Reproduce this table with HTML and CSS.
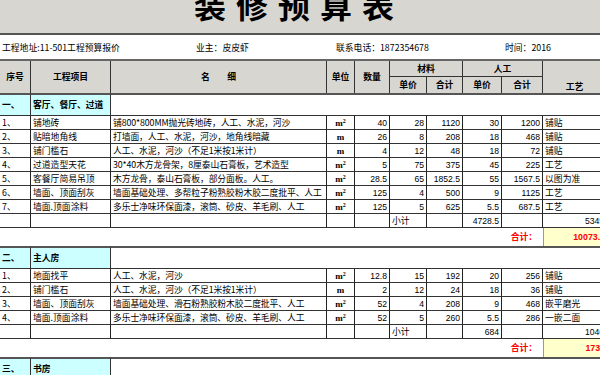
FILE: index.html
```html
<!DOCTYPE html>
<html lang="zh">
<head>
<meta charset="utf-8">
<title>装修预算表</title>
<link rel="stylesheet" href="styles.css">
</head>
<body>
<div class="page">
  <div class="title"><div class="title-text">装修预算表</div></div>
  <div class="info">
    <span>工程地址:11-501工程预算报价</span>
    <span>业主：皮皮虾</span>
    <span>联系电话：1872354678</span>
    <span>时间：2016</span>
  </div>
  <table class="sheet">
    <colgroup>
      <col class="c1"><col class="c2"><col class="c3"><col class="c4"><col class="c5">
      <col class="c6"><col class="c7"><col class="c8"><col class="c9"><col class="c10">
    </colgroup>
    <thead>
      <tr class="h1">
        <th rowspan="2">序号</th>
        <th rowspan="2">工程项目</th>
        <th rowspan="2">名&emsp;&emsp;细</th>
        <th rowspan="2">单位</th>
        <th rowspan="2">数量</th>
        <th colspan="2" class="grp">材料</th>
        <th colspan="2" class="grp">人工</th>
        <th rowspan="2" class="craft">工艺</th>
      </tr>
      <tr class="h2">
        <th>单价</th><th>合计</th><th>单价</th><th>合计</th>
      </tr>
    </thead>
    <tbody>
      <tr class="sec">
        <td class="cy">一、</td><td class="cy">客厅、餐厅、过道</td><td colspan="8" class="blank"></td>
      </tr>
      <tr class="row"><td>1、</td><td>铺地砖</td><td class="desc">铺800*800MM抛光砖地砖，人工、水泥，河沙</td><td class="u">m<sup>2</sup></td><td class="n">40</td><td class="n">28</td><td class="n">1120</td><td class="n">30</td><td class="n">1200</td><td>铺贴</td></tr>
      <tr class="row"><td>2、</td><td>贴暗地角线</td><td class="desc">打墙面，人工、水泥，河沙，地角线暗藏</td><td class="u">m</td><td class="n">26</td><td class="n">8</td><td class="n">208</td><td class="n">18</td><td class="n">468</td><td>铺贴</td></tr>
      <tr class="row"><td>3、</td><td>铺门槛石</td><td class="desc">人工、水泥，河沙（不足1米按1米计）</td><td class="u">m</td><td class="n">4</td><td class="n">12</td><td class="n">48</td><td class="n">18</td><td class="n">72</td><td>铺贴</td></tr>
      <tr class="row"><td>4、</td><td>过道造型天花</td><td class="desc">30*40木方龙骨架，8厘泰山石膏板，艺术造型</td><td class="u">m<sup>2</sup></td><td class="n">5</td><td class="n">75</td><td class="n">375</td><td class="n">45</td><td class="n">225</td><td>工艺</td></tr>
      <tr class="row"><td>5、</td><td>客餐厅简易吊顶</td><td class="desc">木方龙骨，泰山石膏板，部分面板。人工。</td><td class="u">m<sup>2</sup></td><td class="n">28.5</td><td class="n">65</td><td class="n">1852.5</td><td class="n">55</td><td class="n">1567.5</td><td>以图为准</td></tr>
      <tr class="row"><td>6、</td><td>墙面、顶面刮灰</td><td class="desc">墙面基础处理、多帮粒子粉熟胶粉木胶二度批平、人工</td><td class="u">m<sup>2</sup></td><td class="n">125</td><td class="n">4</td><td class="n">500</td><td class="n">9</td><td class="n">1125</td><td>工艺</td></tr>
      <tr class="row"><td>7、</td><td>墙面.顶面涂料</td><td class="desc">多乐士净味环保面漆，滚筒、砂皮、羊毛刷、人工</td><td class="u">m<sup>2</sup></td><td class="n">125</td><td class="n">5</td><td class="n">625</td><td class="n">5.5</td><td class="n">687.5</td><td>工艺</td></tr>
      <tr class="row"><td></td><td></td><td></td><td></td><td></td><td>小计</td><td></td><td class="n">4728.5</td><td></td><td class="n">5345</td></tr>
      <tr class="total"><td colspan="9" class="tlabel">合计：</td><td class="tval">10073.5</td></tr>

      <tr class="sec">
        <td class="cy">二、</td><td class="cy">主人房</td><td colspan="8" class="blank"></td>
      </tr>
      <tr class="row"><td>1、</td><td>地面找平</td><td class="desc">人工、水泥，河沙</td><td class="u">m<sup>2</sup></td><td class="n">12.8</td><td class="n">15</td><td class="n">192</td><td class="n">20</td><td class="n">256</td><td>铺贴</td></tr>
      <tr class="row"><td>2、</td><td>铺门槛石</td><td class="desc">人工、水泥，河沙（不足1米按1米计）</td><td class="u">m</td><td class="n">2</td><td class="n">12</td><td class="n">24</td><td class="n">18</td><td class="n">36</td><td>铺贴</td></tr>
      <tr class="row"><td>3、</td><td>墙面、顶面刮灰</td><td class="desc">墙面基础处理、滑石粉熟胶粉木胶二度批平、人工</td><td class="u">m<sup>2</sup></td><td class="n">52</td><td class="n">4</td><td class="n">208</td><td class="n">9</td><td class="n">468</td><td>嵌平磨光</td></tr>
      <tr class="row"><td>4、</td><td>墙面.顶面涂料</td><td class="desc">多乐士净味环保面漆，滚筒、砂皮、羊毛刷、人工</td><td class="u">m<sup>2</sup></td><td class="n">52</td><td class="n">5</td><td class="n">260</td><td class="n">5.5</td><td class="n">286</td><td>一嵌二面</td></tr>
      <tr class="row"><td></td><td></td><td></td><td></td><td></td><td>小计</td><td></td><td class="n">684</td><td></td><td class="n">1046</td></tr>
      <tr class="total"><td colspan="9" class="tlabel">合计：</td><td class="tval">1730</td></tr>

      <tr class="sec">
        <td class="cy">三、</td><td class="cy">书房</td><td colspan="8" class="blank"></td>
      </tr>
    </tbody>
  </table>
</div>
</body>
</html>
```

FILE: styles.css
```css
html, body {
  margin: 0;
  padding: 0;
  background: #ffffff;
}
body {
  font-family: "Noto Sans CJK SC", "Liberation Sans", sans-serif;
  font-size: 8.8px;
  color: #000000;
}
.page {
  width: 600px;
  height: 375px;
  overflow: hidden;
}
.title {
  height: 33px;
  background: #d8d6d1;
  border-bottom: 2px solid #555555;
  overflow: hidden;
}
.title-text {
  margin-top: -12px;
  padding-left: 194px;
  font-size: 32px;
  line-height: 32px;
  font-weight: bold;
  letter-spacing: 10px;
  white-space: nowrap;
}
.info {
  height: 24px;
  display: grid;
  grid-template-columns: 194px 140px 169px 1fr;
  align-items: center;
  padding-left: 2px;
  border-bottom: 2px solid #666666;
  white-space: nowrap;
}
.sheet {
  width: 607px;
  table-layout: fixed;
  border-collapse: separate;
  border-spacing: 0;
}
.c1 { width: 31px; }
.c2 { width: 80px; }
.c3 { width: 216px; }
.c4 { width: 28px; }
.c5 { width: 35px; }
.c6 { width: 37px; }
.c7 { width: 36px; }
.c8 { width: 39px; }
.c9 { width: 41px; }
.c10 { width: 64px; }
.sheet th, .sheet td {
  padding: 0;
  white-space: nowrap;
  overflow: hidden;
  line-height: 12px;
  box-sizing: border-box;
}
.sheet th {
  background: #d8d6d1;
  font-weight: bold;
  text-align: center;
  vertical-align: middle;
  border-right: 1px solid #333333;
}
.h1 { height: 16px; }
.h2 { height: 16px; }
.h1 th.grp { border-bottom: 1px solid #333333; }
.h1 th.craft { vertical-align: bottom; padding-bottom: 0; }
.sec { height: 23px; }
.sec td {
  border-top: 2px solid #555555;
  border-bottom: 1px solid #333333;
  font-weight: bold;
  vertical-align: middle;
  padding-left: 2px;
}
.sec td.cy {
  background: #ccffff;
  border-right: 1px solid #333333;
}
.row { height: 14px; }
.row td {
  border-right: 1px solid #222222;
  border-bottom: 1px solid #333333;
  padding-left: 2px;
  vertical-align: middle;
}
.row td.desc {
  letter-spacing: -0.1px;
}
.row td.u {
  text-align: center;
  padding-left: 0;
  font-family: "Liberation Serif", serif;
  font-weight: bold;
  font-size: 9px;
}
.row td.u sup {
  font-size: 6px;
  line-height: 0;
  vertical-align: 3px;
}
.row td.n {
  text-align: right;
  padding-left: 0;
  padding-right: 2px;
  font-family: "Liberation Sans", sans-serif;
  font-size: 8.6px;
}
.total { height: 18px; }
.total td {
  color: #ff0000;
  font-weight: bold;
  vertical-align: middle;
}
.total td.tlabel {
  text-align: right;
  padding-right: 6px;
}
.total td.tval {
  background: #ffffcc;
  border-left: 1px solid #999999;
  text-align: right;
  padding-right: 2px;
  font-family: "Liberation Sans", sans-serif;
}
```
